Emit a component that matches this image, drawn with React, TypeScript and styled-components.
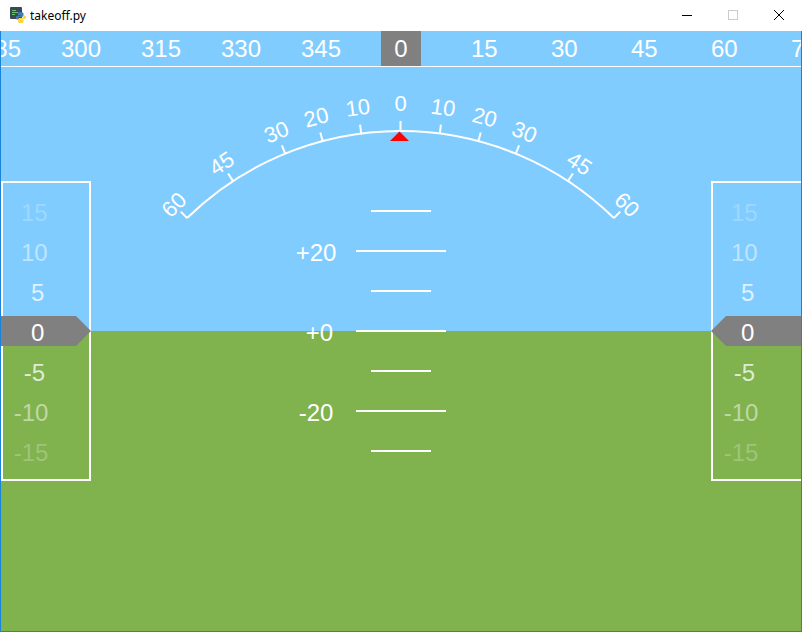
import React from "react";
import styled, { createGlobalStyle } from "styled-components";

const SKY = "#80ccff";
const GROUND = "#80b24e";
const BORDER = "#1a84d8";
const FONT = `"Liberation Sans", Arial, sans-serif`;

const GlobalStyle = createGlobalStyle`
  html, body { margin: 0; padding: 0; background: #ffffff; }
  body { font-family: ${FONT}; }
`;

const Window = styled.div`
  width: 802px;
  height: 632px;
  display: flex;
  flex-direction: column;
  background: #ffffff;
  overflow: hidden;
`;

const TitleBar = styled.div`
  height: 31px;
  flex: none;
  display: flex;
  align-items: center;
  background: #ffffff;
`;

const AppIcon = styled.svg`
  flex: none;
  width: 16px;
  height: 16px;
  margin-left: 10px;
  margin-top: -1px;
`;

const Title = styled.span`
  margin-left: 4px;
  font-family: "Segoe UI", "Noto Sans", sans-serif;
  font-size: 12px;
  color: #000000;
  margin-top: -1px;
`;

const Controls = styled.div`
  margin-left: auto;
  display: flex;
  height: 100%;
`;

const ControlButton = styled.div`
  width: 46px;
  height: 30px;
  display: flex;
  align-items: center;
  justify-content: center;
`;

const MinimizeGlyph = styled.div`
  width: 10px;
  height: 1px;
  background: #000000;
`;

const MaximizeGlyph = styled.div`
  width: 8px;
  height: 8px;
  border: 1px solid #cccccc;
`;

const Viewport = styled.div`
  flex: none;
  width: 800px;
  height: 600px;
  border: 1px solid ${BORDER};
  border-top: none;
  background: linear-gradient(
    to bottom,
    ${SKY} 0,
    ${SKY} 300px,
    ${GROUND} 300px,
    ${GROUND} 100%
  );
  display: flex;
  flex-direction: column;
  overflow: hidden;
  color: #ffffff;
  font-family: ${FONT};
`;

const HeadingTape = styled.div`
  flex: none;
  height: 35px;
  border-bottom: 1px solid #ffffff;
  overflow: hidden;
`;

const HeadingStrip = styled.div`
  display: flex;
  height: 100%;
  margin-left: -40px;
`;

const HeadingMark = styled.div`
  flex: none;
  width: 80px;
  height: 100%;
  display: flex;
  justify-content: center;
`;

const HeadingLabel = styled.div<{ $active?: boolean }>`
  width: 40px;
  height: 100%;
  display: flex;
  align-items: center;
  justify-content: center;
  white-space: pre;
  font-size: 24px;
  background: ${(p) => (p.$active ? "#808080" : "transparent")};
`;

const Body = styled.div`
  flex: 1;
  display: flex;
  align-items: flex-start;
`;

const Tape = styled.div<{ $width: number }>`
  flex: none;
  box-sizing: border-box;
  width: ${(p) => p.$width}px;
  height: 300px;
  margin-top: 114px;
  border: 2px solid #ffffff;
  display: flex;
  flex-direction: column;
  justify-content: center;
`;

const TapeRow = styled.div`
  flex: none;
  height: 40px;
  display: flex;
  align-items: center;
`;

const Marker = styled.div<{ $side: "left" | "right" }>`
  flex: 1;
  height: 30px;
  margin: 0 -2px;
  padding-left: 2px;
  display: flex;
  align-items: center;
  background: #808080;
  clip-path: ${(p) =>
    p.$side === "left"
      ? "polygon(0 0, calc(100% - 15px) 0, 100% 50%, calc(100% - 15px) 100%, 0 100%)"
      : "polygon(15px 0, 100% 0, 100% 100%, 15px 100%, 0 50%)"};
`;

const TapeValue = styled.div<{ $alpha: number }>`
  flex: none;
  width: 56px;
  padding-top: 3px;
  text-align: center;
  white-space: pre;
  font-size: 24px;
  line-height: 27px;
  color: rgba(255, 255, 255, ${(p) => p.$alpha});
`;

const Center = styled.div`
  flex: none;
  width: 620px;
  display: flex;
  flex-direction: column;
`;

const RollScale = styled.svg`
  display: block;
  flex: none;
  overflow: visible;
`;

const Ladder = styled.div`
  display: grid;
  grid-template-columns: 1fr 90px 1fr;
  grid-auto-rows: 40px;
  align-items: center;
`;

const LadderLabel = styled.div`
  grid-column: 1;
  justify-self: end;
  width: 80px;
  padding-top: 3px;
  text-align: center;
  white-space: pre;
  font-size: 24px;
  line-height: 27px;
`;

const LadderLine = styled.div<{ $long: boolean }>`
  grid-column: 2;
  justify-self: center;
  width: ${(p) => (p.$long ? 90 : 60)}px;
  height: 2px;
  background: #ffffff;
`;

const HEADINGS = [285, 300, 315, 330, 345, 0, 15, 30, 45, 60, 75];
const TAPE = [15, 10, 5, 0, -5, -10, -15];
const PITCH = [
  { v: 30, label: "" },
  { v: 20, label: "+20" },
  { v: 10, label: "" },
  { v: 0, label: " +0" },
  { v: -10, label: "" },
  { v: -20, label: "-20" },
  { v: -30, label: "" },
];
const ROLL = [-60, -45, -30, -20, -10, 0, 10, 20, 30, 45, 60];

const CX = 399.5;
const CY = 405;
const R = 305;
const K = 0.74;

function polar(r: number, deg: number): [number, number] {
  const a = (deg * Math.PI) / 180;
  return [CX + r * Math.sin(a), CY - r * Math.cos(a)];
}

function TapeColumn({ side, width }: { side: "left" | "right"; width: number }) {
  return (
    <Tape $width={width}>
      {TAPE.map((v) => {
        const text = String(v).padStart(3, " ");
        const value = <TapeValue $alpha={1 - Math.abs(v) / 20}>{text}</TapeValue>;
        return (
          <TapeRow key={v}>
            {v === 0 ? <Marker $side={side}>{value}</Marker> : value}
          </TapeRow>
        );
      })}
    </Tape>
  );
}

function RollIndicator() {
  const [sx, sy] = polar(R, -60 * K);
  const [ex, ey] = polar(R, 60 * K);
  return (
    <RollScale width={620} height={124} viewBox="90 36 620 124">
      <path
        d={`M ${sx} ${sy} A ${R} ${R} 0 0 1 ${ex} ${ey}`}
        fill="none"
        stroke="#ffffff"
        strokeWidth={2}
      />
      {ROLL.map((v) => {
        const a = v * K;
        const [x1, y1] = polar(R, a);
        const [x2, y2] = polar(R + (v === 0 ? 10 : 9), a);
        const [lx, ly] = polar(332.6 - 0.2 * Math.abs(a), a);
        return (
          <g key={v}>
            <line x1={x1} y1={y1} x2={x2} y2={y2} stroke="#ffffff" strokeWidth={2} />
            <text
              x={lx}
              y={ly}
              fill="#ffffff"
              fontSize={22}
              fontFamily={FONT}
              textAnchor="middle"
              dominantBaseline="central"
              transform={`rotate(${a} ${lx} ${ly})`}
            >
              {Math.abs(v)}
            </text>
          </g>
        );
      })}
      <polygon points="389,110 408,110 398.5,100.5" fill="#ff0000" />
    </RollScale>
  );
}

export default function App() {
  return (
    <>
      <GlobalStyle />
      <Window>
        <TitleBar>
          <AppIcon viewBox="0 0 16 16">
            <rect x="0" y="0" width="12" height="12" rx="1" fill="#3b4856" />
            <rect x="2" y="3" width="4" height="1" fill="#6cc070" />
            <rect x="2" y="5" width="6" height="1" fill="#6cc070" />
            <rect x="2" y="7" width="3" height="1" fill="#6cc070" />
            <path
              d="M10.5 5 C8.5 5 8 5.8 8 6.8 V8.5 H11 V9 H7 C6 9 6 10 6 11 C6 12 6.6 12.5 7.5 12.5 H8 V11.5 C8 10.6 8.6 10 9.5 10 H12 C12.8 10 13.5 9.4 13.5 8.6 V6.8 C13.5 5.8 12.6 5 10.5 5 Z"
              fill="#3f7cb8"
            />
            <path
              d="M11 16 C13 16 13.5 15.2 13.5 14.2 V12.5 H10.5 V12 H14.5 C15.5 12 16 11 16 10 C16 9 15.2 8.5 14.3 8.5 H13.5 V9.5 C13.5 10.4 12.9 11 12 11 H9.5 C8.7 11 8 11.6 8 12.4 V14.2 C8 15.2 8.9 16 11 16 Z"
              fill="#ffd43b"
            />
          </AppIcon>
          <Title>takeoff.py</Title>
          <Controls>
            <ControlButton>
              <MinimizeGlyph />
            </ControlButton>
            <ControlButton>
              <MaximizeGlyph />
            </ControlButton>
            <ControlButton>
              <svg width="10" height="10" viewBox="0 0 10 10">
                <path d="M0 0 L10 10 M10 0 L0 10" stroke="#000000" strokeWidth={1} />
              </svg>
            </ControlButton>
          </Controls>
        </TitleBar>
        <Viewport>
          <HeadingTape>
            <HeadingStrip>
              {HEADINGS.map((h) => (
                <HeadingMark key={h}>
                  <HeadingLabel $active={h === 0}>
                    {h === 0 ? "0" : String(h).padStart(3, " ")}
                  </HeadingLabel>
                </HeadingMark>
              ))}
            </HeadingStrip>
          </HeadingTape>
          <Body>
            <TapeColumn side="left" width={90} />
            <Center>
              <RollIndicator />
              <Ladder>
                {PITCH.map((p) => (
                  <React.Fragment key={p.v}>
                    {p.label ? <LadderLabel>{p.label}</LadderLabel> : null}
                    <LadderLine $long={p.label !== ""} />
                  </React.Fragment>
                ))}
              </Ladder>
            </Center>
            <TapeColumn side="right" width={94} />
          </Body>
        </Viewport>
      </Window>
    </>
  );
}
